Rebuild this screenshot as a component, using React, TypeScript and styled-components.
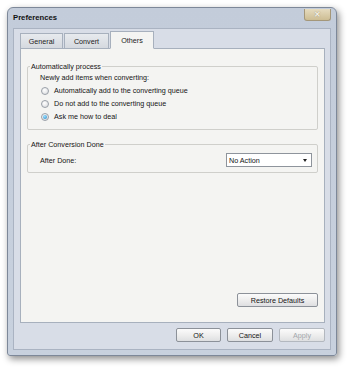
import React from 'react';
import styled, { createGlobalStyle } from 'styled-components';

const GlobalStyle = createGlobalStyle`
  html, body {
    margin: 0;
    padding: 0;
    background: #ffffff;
  }
  body {
    font-family: "Liberation Sans", Arial, sans-serif;
    font-size: 7.2px;
    color: #141414;
  }
`;

const Page = styled.div`
  width: 350px;
  height: 368px;
  padding: 7px 0 0 7px;
  box-sizing: border-box;
`;

const Window = styled.div`
  width: 330px;
  height: 349px;
  box-sizing: border-box;
  border: 1px solid #7d8899;
  border-radius: 6px 6px 3px 3px;
  background: linear-gradient(#c3ccda, #c8d1de);
  box-shadow: 2px 3px 7px rgba(0, 0, 0, 0.45);
  padding: 0 5px 5px 5px;
  display: flex;
  flex-direction: column;
`;

const TitleBar = styled.div`
  height: 20px;
  display: flex;
  justify-content: space-between;
  align-items: flex-start;
`;

const TitleText = styled.span`
  font-weight: bold;
  font-size: 7.7px;
  color: #111;
  margin: 5px 0 0 0;
`;

const CloseButton = styled.div`
  width: 25px;
  height: 11px;
  margin: 1px 0 0 0;
  border: 1px solid #a4977a;
  border-top: none;
  border-radius: 0 0 3px 3px;
  background: linear-gradient(#e6dcc0, #cdbd93);
  color: #f4f0e4;
  font-size: 8px;
  font-weight: bold;
  display: flex;
  align-items: center;
  justify-content: center;
  text-shadow: 0 0 1px #8a7d5c;
`;

const Client = styled.div`
  flex: 1;
  background: #d8dde7;
  border: 1px solid #aab3c2;
  padding: 1px 5px 7px 6px;
  display: flex;
  flex-direction: column;
`;

const TabRow = styled.div`
  display: flex;
  align-items: flex-end;
  height: 19px;
  margin-bottom: -1px;
  position: relative;
  z-index: 1;
`;

const Tab = styled.div<{ $active?: boolean; $w: number }>`
  width: ${p => p.$w}px;
  height: ${p => (p.$active ? 18 : 16)}px;
  box-sizing: border-box;
  display: flex;
  align-items: center;
  justify-content: center;
  border: 1px solid #a7b0bd;
  border-bottom: 1px solid ${p => (p.$active ? '#f4f4f2' : '#a7b0bd')};
  margin-right: 1px;
  background: ${p => (p.$active ? '#f4f4f2' : 'linear-gradient(#e7eaee, #d5d9df)')};
  color: #222;
`;

const Panel = styled.div`
  flex: 1;
  background: #f4f4f2;
  border: 1px solid #a7b0bd;
  padding: 13px 6px 15px 6px;
  display: flex;
  flex-direction: column;
`;

const Group = styled.fieldset<{ $h: number }>`
  margin: 0 0 10px 0;
  height: ${p => p.$h}px;
  box-sizing: border-box;
  border: 1px solid #cfcfcb;
  border-radius: 2px;
  padding: 0 0 0 12px;
  min-width: 0;
`;

const Legend = styled.legend`
  padding: 0 1px;
  margin-left: -10px;
  color: #141414;
`;

const Line = styled.div`
  height: 13px;
  display: flex;
  align-items: center;
`;

const RadioRow = styled.div`
  height: 13px;
  display: flex;
  align-items: center;
  padding-left: 1px;
`;

const Radio = styled.span<{ $checked?: boolean }>`
  width: 8px;
  height: 8px;
  box-sizing: border-box;
  border-radius: 50%;
  border: 1px solid #9aa0a8;
  background: radial-gradient(circle at 40% 35%, #ffffff, #d6d8dc);
  margin-right: 5px;
  display: flex;
  align-items: center;
  justify-content: center;
  &::after {
    content: '';
    display: ${p => (p.$checked ? 'block' : 'none')};
    width: 4px;
    height: 4px;
    border-radius: 50%;
    background: radial-gradient(circle at 40% 35%, #9fe0ff, #1d86c9);
  }
`;

const DoneRow = styled.div`
  display: flex;
  align-items: center;
  justify-content: space-between;
  padding: 4px 5px 0 0;
`;

const Select = styled.div`
  width: 86px;
  height: 14px;
  box-sizing: border-box;
  border: 1px solid #8e949c;
  background: #ffffff;
  display: flex;
  align-items: center;
  justify-content: space-between;
  padding: 0 4px 0 2px;
`;

const Caret = styled.span`
  width: 0;
  height: 0;
  border-left: 2.5px solid transparent;
  border-right: 2.5px solid transparent;
  border-top: 3px solid #222;
`;

const Spacer = styled.div`
  flex: 1;
`;

const ButtonRow = styled.div<{ $top?: number }>`
  display: flex;
  justify-content: flex-end;
  gap: 6px;
  margin-top: ${p => p.$top || 0}px;
`;

const Button = styled.div<{ $w: number; $disabled?: boolean }>`
  width: ${p => p.$w}px;
  height: 14px;
  box-sizing: border-box;
  border: 1px solid ${p => (p.$disabled ? '#b3b8bf' : '#8c9199')};
  border-radius: 2px;
  background: linear-gradient(#fbfbfb 0%, #eeeeee 50%, #dedfe1 100%);
  color: ${p => (p.$disabled ? '#a2a6ab' : '#141414')};
  display: flex;
  align-items: center;
  justify-content: center;
`;

const App: React.FC = () => {
  return (
    <Page>
      <GlobalStyle />
      <Window>
        <TitleBar>
          <TitleText>Preferences</TitleText>
          <CloseButton>✕</CloseButton>
        </TitleBar>
        <Client>
          <TabRow>
            <Tab $w={43}>General</Tab>
            <Tab $w={45}>Convert</Tab>
            <Tab $w={44} $active>Others</Tab>
          </TabRow>
          <Panel>
            <Group $h={68}>
              <Legend>Automatically process</Legend>
              <Line>Newly add items when converting:</Line>
              <RadioRow>
                <Radio />
                Automatically add to the converting queue
              </RadioRow>
              <RadioRow>
                <Radio />
                Do not add to the converting queue
              </RadioRow>
              <RadioRow>
                <Radio $checked />
                Ask me how to deal
              </RadioRow>
            </Group>
            <Group $h={33}>
              <Legend>After Conversion Done</Legend>
              <DoneRow>
                <span>After Done:</span>
                <Select>
                  <span>No Action</span>
                  <Caret />
                </Select>
              </DoneRow>
            </Group>
            <Spacer />
            <ButtonRow>
              <Button $w={81}>Restore Defaults</Button>
            </ButtonRow>
          </Panel>
          <ButtonRow $top={5}>
            <Button $w={45}>OK</Button>
            <Button $w={46}>Cancel</Button>
            <Button $w={46} $disabled>Apply</Button>
          </ButtonRow>
        </Client>
      </Window>
    </Page>
  );
};

export default App;
